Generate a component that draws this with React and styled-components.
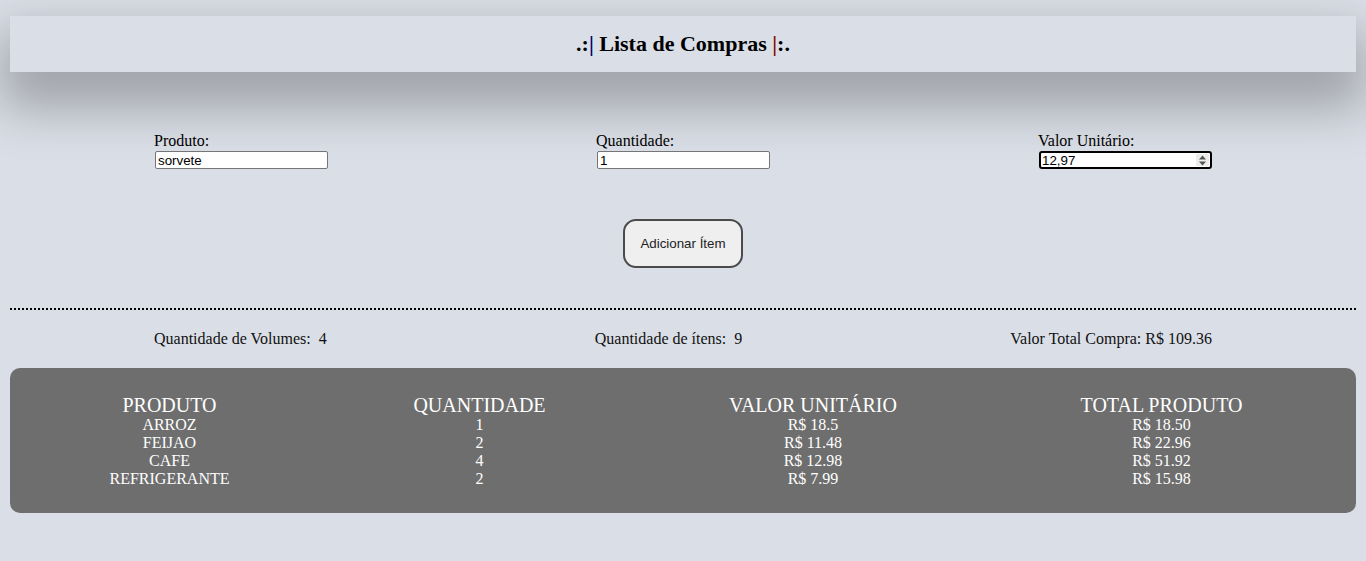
import React from "react";
import styled, { createGlobalStyle } from "styled-components";

const Global = createGlobalStyle`
  html, body { margin: 0; padding: 0; }
  body {
    background: #dadee6;
    font-family: "Liberation Serif", "Times New Roman", serif;
    font-size: 16px;
    color: #000;
  }
  #root { padding-top: 16px; padding-bottom: 30px; }
`;

const Header = styled.header`
  margin: 0 10px;
  height: 56px;
  background: #dadee6;
  display: flex;
  align-items: center;
  justify-content: center;
  box-shadow: 0 26px 50px 10px rgba(0, 0, 0, 0.27);
  position: relative;
  z-index: 1;
`;

const Title = styled.h1`
  margin: 0;
  font-size: 22px;
  font-weight: bold;
  white-space: pre;
`;

const Pipe = styled.span`
  color: ${(p) => p.$color};
`;

const Row = styled.div`
  display: flex;
  justify-content: space-around;
  margin: ${(p) => p.$mt}px 20px 0;
`;

const Field = styled.div`
  width: 174px;
  display: flex;
  flex-direction: column;
  gap: 1px;
`;

const Label = styled.label`
  font-size: 16px;
  line-height: 19px;
`;

const InputWrap = styled.div`
  position: relative;
  margin-left: 1px;
  width: 173px;
`;

const Input = styled.input`
  box-sizing: border-box;
  width: 173px;
  height: 18px;
  padding: 0 2px;
  font-family: "Liberation Sans", Arial, sans-serif;
  font-size: 13.33px;
  color: #000;
  background: #fff;
  border: ${(p) => (p.$focused ? "2px solid #000" : "1px solid #767676")};
  border-radius: ${(p) => (p.$focused ? "3px" : "2px")};
  padding-left: ${(p) => (p.$focused ? "1px" : "2px")};
  outline: none;
  display: block;
`;

const Spinner = styled.div`
  position: absolute;
  right: 3px;
  top: 3px;
  width: 13px;
  height: 12px;
  background: #ececec;
  display: flex;
  align-items: center;
  justify-content: center;
`;

const ButtonRow = styled.div`
  display: flex;
  justify-content: center;
  margin-top: 50px;
`;

const Button = styled.button`
  width: 120px;
  height: 49px;
  box-sizing: border-box;
  border: 2px solid #4a4a4a;
  border-radius: 13px;
  background: #efefef;
  font-family: "Liberation Sans", Arial, sans-serif;
  font-size: 13.33px;
  color: #222;
  padding: 0;
`;

const Divider = styled.hr`
  margin: 40px 10px 0;
  border: 0;
  border-top: 2px dotted #000;
  height: 0;
`;

const Stat = styled.div`
  font-size: 16px;
  line-height: 18px;
  white-space: pre;
  color: #111;
`;

const Table = styled.div`
  margin: 20px 10px 0;
  background: #6e6e6e;
  border-radius: 10px;
  padding: 27px 14.5px 25px;
  display: grid;
  grid-template-columns: 290fr 330fr 337fr 360fr;
  color: #fff;
  text-align: center;
`;

const Th = styled.div`
  font-size: 20px;
  line-height: 21px;
`;

const Td = styled.div`
  font-size: 16px;
  line-height: 18px;
`;

const items = [
  ["ARROZ", "1", "R$ 18.5", "R$ 18.50"],
  ["FEIJAO", "2", "R$ 11.48", "R$ 22.96"],
  ["CAFE", "4", "R$ 12.98", "R$ 51.92"],
  ["REFRIGERANTE", "2", "R$ 7.99", "R$ 15.98"],
];

export default function App() {
  return (
    <>
      <Global />
      <Header>
        <Title>
          .:<Pipe $color="#00006b">|</Pipe> Lista de Compras{" "}
          <Pipe $color="#8b0000">|</Pipe>:.
        </Title>
      </Header>
      <Row $mt={59}>
        <Field>
          <Label>Produto:</Label>
          <InputWrap>
            <Input defaultValue="sorvete" />
          </InputWrap>
        </Field>
        <Field>
          <Label>Quantidade:</Label>
          <InputWrap>
            <Input defaultValue="1" />
          </InputWrap>
        </Field>
        <Field>
          <Label>Valor Unitário:</Label>
          <InputWrap>
            <Input $focused defaultValue="12,97" />
            <Spinner>
              <svg width="9" height="11" viewBox="0 0 9 11">
                <path d="M4.5 0.5 L8 4.5 L1 4.5 Z" fill="#555" />
                <path d="M4.5 10.5 L8 6.5 L1 6.5 Z" fill="#555" />
              </svg>
            </Spinner>
          </InputWrap>
        </Field>
      </Row>
      <ButtonRow>
        <Button>Adicionar Ítem</Button>
      </ButtonRow>
      <Divider />
      <Row $mt={20}>
        <Stat>Quantidade de Volumes:  4</Stat>
        <Stat>Quantidade de ítens:  9</Stat>
        <Stat>Valor Total Compra: R$ 109.36</Stat>
      </Row>
      <Table>
        <Th>PRODUTO</Th>
        <Th>QUANTIDADE</Th>
        <Th>VALOR UNITÁRIO</Th>
        <Th>TOTAL PRODUTO</Th>
        {items.map((r) =>
          r.map((c, i) => <Td key={r[0] + i}>{c}</Td>)
        )}
      </Table>
    </>
  );
}
